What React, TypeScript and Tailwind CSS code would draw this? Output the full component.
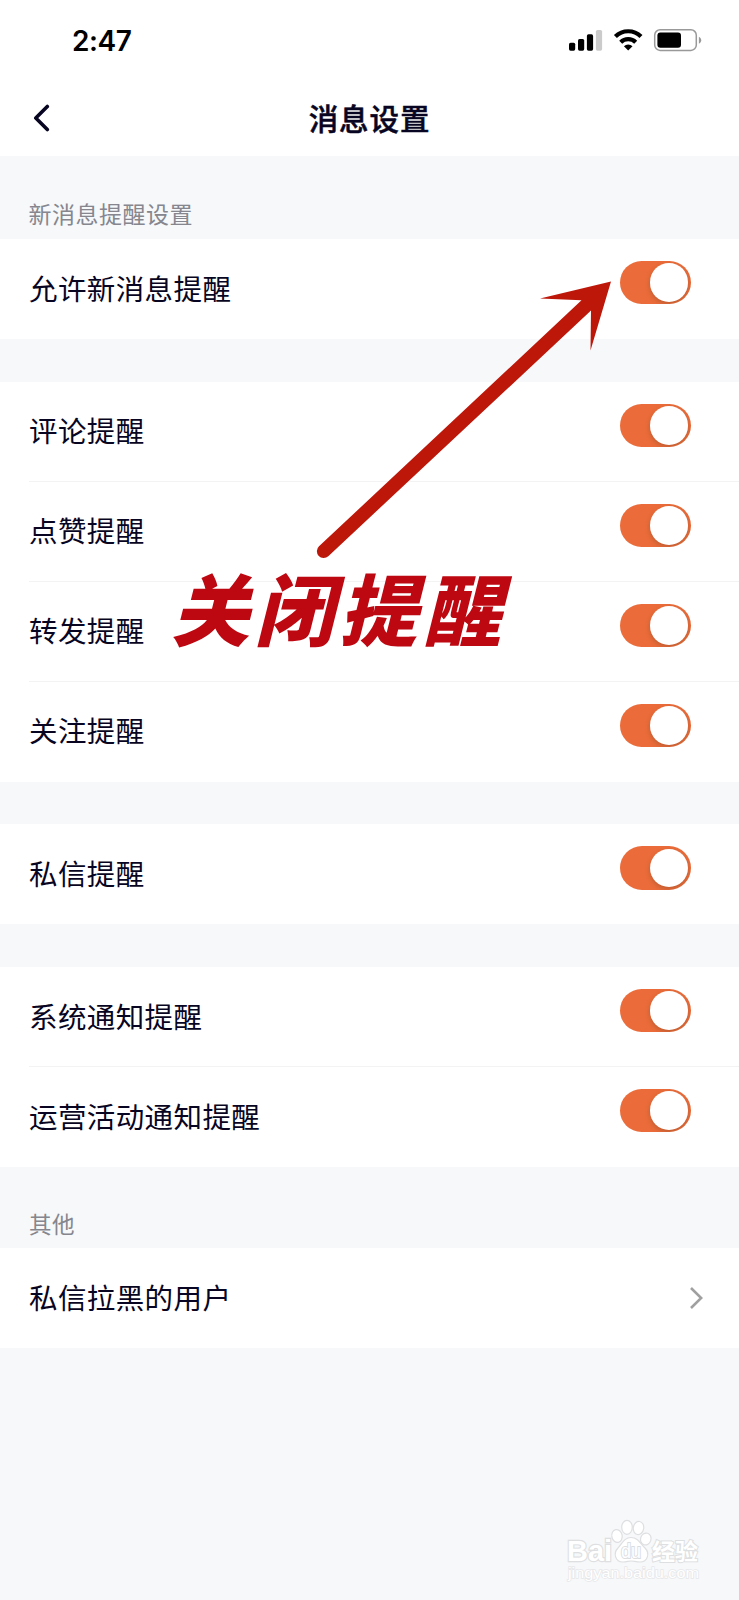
import React from "react";

function StatusIcons() {
  return (
    <svg width="133" height="24" viewBox="0 0 133 24" className="block">
      <rect x="0" y="13.7" width="6.2" height="8" rx="1.6" fill="#000" />
      <rect x="9" y="10" width="6.2" height="11.7" rx="1.6" fill="#000" />
      <rect x="17.9" y="5.3" width="6.2" height="16.4" rx="1.6" fill="#000" />
      <rect x="26.9" y="1" width="6.2" height="20.7" rx="1.6" fill="#cbcbcb" />
      <g fill="none" stroke="#000" strokeWidth="4.2">
        <path d="M46.4 7.6A18 18 0 0 1 72 7.6" />
        <path d="M51.7 13.2A10.6 10.6 0 0 1 66.7 13.2" />
      </g>
      <path d="M59.2 21.5L54.9 17.2A6.1 6.1 0 0 1 63.5 17.2Z" fill="#000" />
      <rect x="85.7" y="0.8" width="41.6" height="20.6" rx="5.4" fill="none" stroke="#999" strokeWidth="1.5" />
      <rect x="88.4" y="3.5" width="23.6" height="15.2" rx="3" fill="#000" />
      <path d="M129.9 7.7C131.5 8.5 132.2 9.7 132.2 11.2S131.5 13.9 129.9 14.7Z" fill="#999" />
    </svg>
  );
}

function Toggle() {
  return (
    <div className="mt-[22px] mr-[47.7px] flex h-[43.3px] w-[71.5px] shrink-0 items-center justify-end overflow-hidden rounded-full bg-[#eb6c3a] pr-[3px]">
      <div className="h-[38.5px] w-[38.5px] rounded-full bg-white shadow-[0_2px_5px_0px_rgba(90,60,30,0.32)]" />
    </div>
  );
}

function Row({ label, divider = false, link = false }: { label: string; divider?: boolean; link?: boolean }) {
  return (
    <div className="h-[100px] bg-white pl-[29px]">
      <div className={divider ? "flex h-full justify-between border-b border-[#f3f3f4]" : "flex h-full justify-between"}>
        <span className="pt-[26.6px] text-[28.5px] leading-[44px] tracking-[0.4px] text-[#080522]">{label}</span>
        {link ? (
          <svg width="14" height="24" viewBox="0 0 14 24" className="mt-[38px] mr-[36.5px]">
            <path d="M2 2L12.2 12L2 22" fill="none" stroke="#a0a0a0" strokeWidth="2.6" />
          </svg>
        ) : (
          <Toggle />
        )}
      </div>
    </div>
  );
}

function Group({ labels }: { labels: string[] }) {
  return (
    <section>
      {labels.map((label, i) => (
        <Row key={label} label={label} divider={i < labels.length - 1} />
      ))}
    </section>
  );
}

function Watermark() {
  return (
    <svg
      width="150"
      height="76"
      viewBox="0 0 150 76"
      className="absolute top-[1514px] left-[558px]"
      fontFamily="'Liberation Sans','Noto Sans CJK SC',sans-serif"
    >
      <g fill="#fff" stroke="#dedfe1" strokeWidth="1.2">
        <text x="9" y="47" fontSize="30" fontWeight="bold" paintOrder="stroke" strokeWidth="2.4" textLength="45" lengthAdjust="spacingAndGlyphs">Bai</text>
        <ellipse cx="59" cy="22" rx="5.2" ry="6.5" transform="rotate(-12 59 22)" />
        <ellipse cx="69" cy="13.3" rx="5.3" ry="7" />
        <ellipse cx="80.5" cy="14" rx="5.2" ry="6.6" transform="rotate(10 80.5 14)" />
        <ellipse cx="87.8" cy="25" rx="5.2" ry="6" transform="rotate(18 87.8 25)" />
        <path d="M73 23.5C66 23.5 64 30 60 34C55 39 57 48 65 48C69 48 70 47 73 47S78 48 82 48C90 48 92 39 87 34C82 29 80 23.5 73 23.5Z" />
        <text x="94" y="46" fontSize="23" fontWeight="bold" paintOrder="stroke" strokeWidth="2" textLength="46" lengthAdjust="spacingAndGlyphs">经验</text>
      </g>
      <text x="63" y="44" fontSize="20" fill="#fff" stroke="#dcdddf" strokeWidth="2" paintOrder="stroke" textLength="20" lengthAdjust="spacingAndGlyphs">du</text>
      <text x="10" y="64" fontSize="15.5" fill="#fff" stroke="#e6e7e9" strokeWidth="1.4" paintOrder="stroke" textLength="131" lengthAdjust="spacingAndGlyphs">jingyan.baidu.com</text>
    </svg>
  );
}

export default function App() {
  return (
    <div className="relative h-[1600px] w-[739px] overflow-hidden bg-[#f6f8fa] font-['Noto_Sans_CJK_SC',sans-serif]">
      <header className="h-[156px] bg-white">
        <div className="flex h-[80px] items-start justify-between pt-[29px] pr-[37px] pl-[72px]">
          <span className="font-['Inter',sans-serif] text-[28px] leading-[24px] font-semibold tracking-[-0.4px] text-black">2:47</span>
          <StatusIcons />
        </div>
        <div className="grid h-[76px] grid-cols-[1fr_auto_1fr] items-center">
          <svg width="17" height="28" viewBox="0 0 17 28" className="ml-[33px]">
            <path d="M14.3 2.5L2.8 14L14.3 25.5" fill="none" stroke="#080522" strokeWidth="3.6" strokeLinecap="round" strokeLinejoin="round" />
          </svg>
          <h1 className="-mt-[3px] text-[29.5px] leading-[44px] font-medium tracking-[0.9px] text-[#080522] [-webkit-text-stroke:0.5px_#080522]">消息设置</h1>
          <span />
        </div>
      </header>

      <h2 className="h-[83px] pt-[40px] pl-[28.5px] text-[23px] leading-[34px] tracking-[0.5px] text-[#85868e]">新消息提醒设置</h2>
      <main>
        <div className="flex flex-col gap-[42.7px]">
          <Group labels={["允许新消息提醒"]} />
          <Group labels={["评论提醒", "点赞提醒", "转发提醒", "关注提醒"]} />
          <Group labels={["私信提醒"]} />
          <Group labels={["系统通知提醒", "运营活动通知提醒"]} />
        </div>
        <h2 className="h-[81px] pt-[38.5px] pl-[29px] text-[22.5px] leading-[34px] tracking-[0.6px] text-[#85868e]">其他</h2>
        <Row label="私信拉黑的用户" link />
      </main>

      <svg width="739" height="700" viewBox="0 0 739 700" className="pointer-events-none absolute top-0 left-0">
        <path d="M611 281.5L540 298.5L581.5 300.3L319 546.3A6.7 6.7 0 0 0 328.3 556.2L591 310.5L590.5 350.5Z" fill="#bd170a" />
      </svg>
      <p className="absolute top-[558px] left-[171px] text-[78px] leading-[96px] font-black whitespace-nowrap text-[#bd0711] italic tracking-[6px]">关闭提醒</p>
      <Watermark />
    </div>
  );
}
